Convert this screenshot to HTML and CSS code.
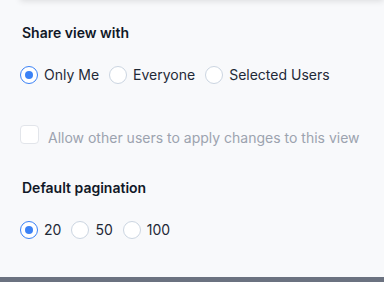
FILE: index.html
```html
<!DOCTYPE html>
<html>
<head>
<meta charset="utf-8">
<link rel="stylesheet" href="styles.css">
</head>
<body>
<div class="page">
  <div class="card-above"></div>
  <div class="content">
    <section class="group">
      <h3 class="title">Share view with</h3>
      <div class="options">
        <label class="opt"><span class="radio checked"></span><span>Only Me</span></label>
        <label class="opt"><span class="radio"></span><span>Everyone</span></label>
        <label class="opt"><span class="radio"></span><span>Selected Users</span></label>
      </div>
    </section>
    <label class="check-row">
      <span class="checkbox"></span>
      <span class="check-label">Allow other users to apply changes to this view</span>
    </label>
    <section class="group">
      <h3 class="title">Default pagination</h3>
      <div class="options">
        <label class="opt"><span class="radio checked"></span><span>20</span></label>
        <label class="opt"><span class="radio"></span><span>50</span></label>
        <label class="opt"><span class="radio"></span><span>100</span></label>
      </div>
    </section>
  </div>
  <div class="footer-bar"></div>
</div>
</body>
</html>
```
FILE: styles.css
```css
* { box-sizing: border-box; }
html, body { margin: 0; padding: 0; }
body {
  background: #f8f9fb;
  font-family: Inter, "Noto Sans", sans-serif;
  color: #1f2937;
  width: 384px;
  height: 282px;
  overflow: hidden;
}
.page {
  display: flex;
  flex-direction: column;
  height: 282px;
}
.card-above {
  height: 12px;
  margin-top: -12px;
  margin-left: 20px;
  background: #ffffff;
  box-shadow: 0 1px 6px rgba(0, 0, 0, 0.12);
  flex: none;
}
.content {
  flex: 1;
  padding: 24px 0 0 20px;
  display: flex;
  flex-direction: column;
}
.group { display: flex; flex-direction: column; }
.title {
  margin: 0;
  padding-left: 2px;
  font-size: 14px;
  font-weight: 600;
  line-height: 18px;
  color: #111827;
}
.options {
  display: flex;
  align-items: center;
  gap: 10px;
  margin-top: 24px;
}
.opt {
  display: flex;
  align-items: center;
  gap: 6px;
  font-size: 14px;
  line-height: 18px;
  color: #1f2937;
}
.radio {
  width: 18px;
  height: 18px;
  border-radius: 50%;
  border: 1px solid #cbd5e1;
  background: #ffffff;
  display: inline-flex;
  align-items: center;
  justify-content: center;
  flex: none;
}
.radio.checked { border: 1.5px solid #3b82f6; }
.radio.checked::after {
  content: "";
  width: 8px;
  height: 8px;
  border-radius: 50%;
  background: #3b82f6;
}
.check-row {
  display: flex;
  align-items: flex-start;
  gap: 9px;
  margin-top: 41px;
  margin-bottom: 32px;
}
.checkbox {
  width: 19px;
  height: 19px;
  border: 1px solid #e2e5ea;
  border-radius: 4px;
  background: #ffffff;
  flex: none;
}
.check-label {
  font-size: 14px;
  line-height: 18px;
  margin-top: 4px;
  color: #9ca3af;
}
.footer-bar {
  height: 5px;
  background: #6b7280;
  flex: none;
}
```
